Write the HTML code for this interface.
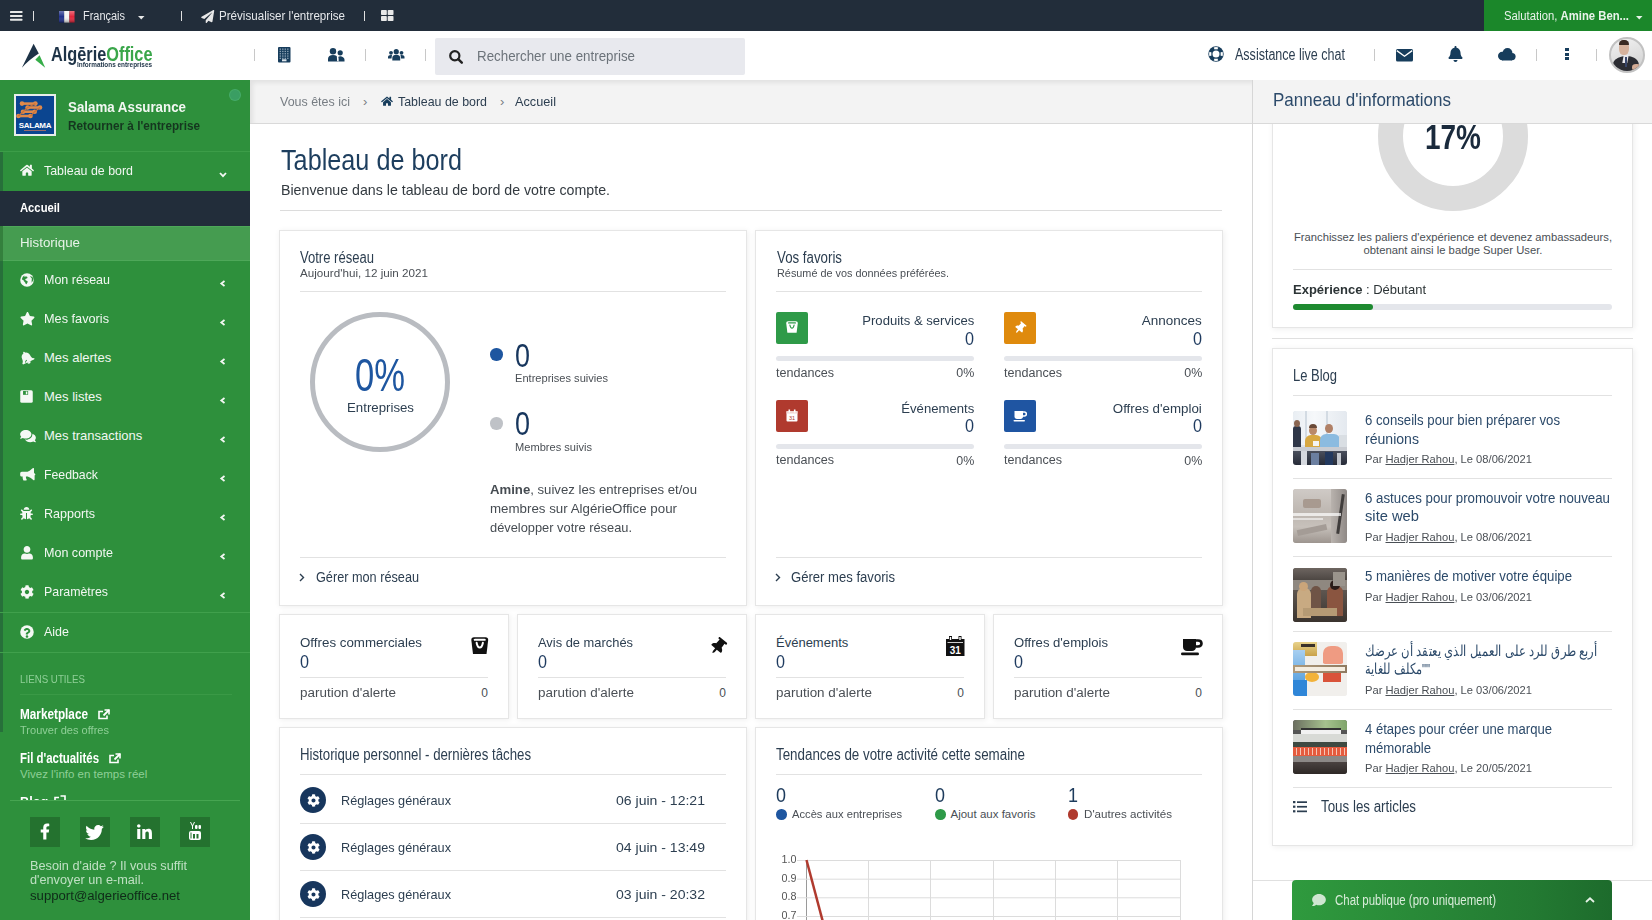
<!DOCTYPE html>
<html><head><meta charset="utf-8"><title>AlgerieOffice</title>
<style>html,body{margin:0;padding:0;width:1652px;height:920px;overflow:hidden;background:#fff;font-family:"Liberation Sans",sans-serif;position:relative}
.t{position:absolute;white-space:nowrap}
svg{position:absolute;overflow:visible}
</style></head><body>
<div style="position:absolute;left:0px;top:0px;width:1652px;height:31px;background:#222d3a"></div>
<div style="position:absolute;left:1484px;top:0px;width:168px;height:31px;background:#1b872a"></div>
<div style="position:absolute;left:0px;top:31px;width:1652px;height:49px;background:#fff"></div>
<div style="position:absolute;left:435px;top:38px;width:310px;height:37px;background:#e8e9ee;border-radius:2px"></div>
<div style="position:absolute;left:0px;top:80px;width:250px;height:840px;background:#2e903c"></div>
<div style="position:absolute;left:0px;top:152px;width:3px;height:580px;background:#27703a"></div>
<div style="position:absolute;left:0px;top:151px;width:250px;height:1px;background:#3c9d48"></div>
<div style="position:absolute;left:0px;top:191px;width:250px;height:35px;background:#222d3a"></div>
<div style="position:absolute;left:0px;top:226px;width:250px;height:35px;background:#459c50;border-top:1px solid #4ea859;border-bottom:1px solid #4ea859;box-sizing:border-box"></div>
<div style="position:absolute;left:0px;top:226px;width:3px;height:35px;background:#34803d"></div>
<div style="position:absolute;left:0px;top:612px;width:250px;height:1px;background:#40a04c"></div>
<div style="position:absolute;left:0px;top:652px;width:250px;height:1px;background:#40a04c"></div>
<div style="position:absolute;left:20px;top:694px;width:212px;height:1px;background:#3a9946"></div>
<div style="position:absolute;left:10px;top:800px;width:230px;height:1px;background:#46a551"></div>
<div style="position:absolute;left:30px;top:817px;width:30px;height:30px;background:#24722f"></div>
<div style="position:absolute;left:80px;top:817px;width:30px;height:30px;background:#24722f"></div>
<div style="position:absolute;left:130px;top:817px;width:30px;height:30px;background:#24722f"></div>
<div style="position:absolute;left:180px;top:817px;width:30px;height:30px;background:#24722f"></div>
<div style="position:absolute;left:250px;top:80px;width:1002px;height:43px;background:#f3f3f3;border-bottom:1px solid #d9d9d9;box-sizing:border-box;height:44px;box-shadow:inset 3px 3px 4px rgba(0,0,0,0.07)"></div>
<div style="position:absolute;left:1252px;top:80px;width:1px;height:840px;background:#d6d6d6"></div>
<div style="position:absolute;left:1253px;top:80px;width:399px;height:44px;background:#f3f3f3;border-bottom:1px solid #d9d9d9;box-sizing:border-box"></div>
<div style="position:absolute;left:280px;top:210px;width:942px;height:1px;background:#dcdcdc"></div>
<div style="position:absolute;left:279px;top:230px;width:468px;height:376px;background:#fff;border:1px solid #e6e6e6;box-sizing:border-box;box-shadow:1px 1px 6px rgba(0,0,0,0.07)"></div>
<div style="position:absolute;left:755px;top:230px;width:468px;height:376px;background:#fff;border:1px solid #e6e6e6;box-sizing:border-box;box-shadow:1px 1px 6px rgba(0,0,0,0.07)"></div>
<div style="position:absolute;left:279px;top:614px;width:230px;height:105px;background:#fff;border:1px solid #e6e6e6;box-sizing:border-box;box-shadow:1px 1px 6px rgba(0,0,0,0.07)"></div>
<div style="position:absolute;left:517px;top:614px;width:230px;height:105px;background:#fff;border:1px solid #e6e6e6;box-sizing:border-box;box-shadow:1px 1px 6px rgba(0,0,0,0.07)"></div>
<div style="position:absolute;left:755px;top:614px;width:230px;height:105px;background:#fff;border:1px solid #e6e6e6;box-sizing:border-box;box-shadow:1px 1px 6px rgba(0,0,0,0.07)"></div>
<div style="position:absolute;left:993px;top:614px;width:230px;height:105px;background:#fff;border:1px solid #e6e6e6;box-sizing:border-box;box-shadow:1px 1px 6px rgba(0,0,0,0.07)"></div>
<div style="position:absolute;left:279px;top:727px;width:468px;height:220px;background:#fff;border:1px solid #e6e6e6;box-sizing:border-box;box-shadow:1px 1px 6px rgba(0,0,0,0.07)"></div>
<div style="position:absolute;left:755px;top:727px;width:468px;height:220px;background:#fff;border:1px solid #e6e6e6;box-sizing:border-box;box-shadow:1px 1px 6px rgba(0,0,0,0.07)"></div>
<div style="position:absolute;left:1272px;top:100px;width:361px;height:228px;background:#fff;border:1px solid #e6e6e6;box-sizing:border-box;box-shadow:1px 1px 6px rgba(0,0,0,0.07)"></div>
<div style="position:absolute;left:1253px;top:80px;width:399px;height:44px;background:#f3f3f3;border-bottom:1px solid #d9d9d9;box-sizing:border-box"></div>
<div style="position:absolute;left:1272px;top:338px;width:361px;height:1px;background:#e0e0e0"></div>
<div style="position:absolute;left:1272px;top:348px;width:361px;height:498px;background:#fff;border:1px solid #e6e6e6;box-sizing:border-box;box-shadow:1px 1px 6px rgba(0,0,0,0.07)"></div>
<div style="position:absolute;left:1253px;top:880px;width:399px;height:1px;background:#e0e0e0"></div>
<svg style="left:10px;top:11px;" width="12.5" height="10" viewBox="0 0 12.5 10"><rect x="0" y="0" width="12.5" height="2" rx=".6" fill="#e8e8e8"/><rect x="0" y="3.9" width="12.5" height="2" rx=".6" fill="#e8e8e8"/><rect x="0" y="7.7" width="12.5" height="2" rx=".6" fill="#e8e8e8"/></svg>
<div style="position:absolute;left:33px;top:11px;width:1px;height:10px;background:#e0e0e0"></div>
<div style="position:absolute;left:181px;top:11px;width:1px;height:10px;background:#e0e0e0"></div>
<div style="position:absolute;left:364px;top:11px;width:1px;height:10px;background:#e0e0e0"></div>
<svg style="left:59px;top:11px;" width="15.5" height="11.5" viewBox="0 0 15.5 11.5"><rect x="0" y="0" width="5.2" height="11.5" fill="#1f2f8a"/><rect x="5.2" y="0" width="5.2" height="11.5" fill="#f4f4f4"/><rect x="10.4" y="0" width="5.1" height="11.5" fill="#e3253a"/><rect x="0" y="0" width="15.5" height="11.5" fill="url(#fl)" opacity=".35"/><defs><linearGradient id="fl" x1="0" y1="0" x2="0" y2="1"><stop offset="0" stop-color="#fff"/><stop offset=".5" stop-color="#fff" stop-opacity="0"/><stop offset="1" stop-color="#000"/></linearGradient></defs></svg>
<svg style="left:137.5px;top:15.8px;" width="6.5" height="3.5" viewBox="0 0 6.5 3.5"><path d="M0 0H6.5L3.25 3.5Z" fill="#e8e8e8"/></svg>
<svg style="left:201px;top:9.5px;" width="13.5" height="13" viewBox="0 0 512 512"><path fill="#e8e8e8" d="M476 3.2L12.5 270.6c-18.1 10.4-15.8 35.6 2.2 43.2L121 358.4l287.3-253.2c5.5-4.9 13.3 2.6 8.6 8.3L176 407v80.5c0 23.6 28.5 32.9 42.5 15.8L282 426l124.6 52.2c14.2 6 30.4-2.9 33-18.2l72-432C515 7.8 493.3-6.8 476 3.2z"/></svg>
<svg style="left:381px;top:10px;" width="12.5" height="11" viewBox="0 0 12.5 11"><rect x="0" y="0" width="5.8" height="5" rx=".8" fill="#e8e8e8"/><rect x="6.7" y="0" width="5.8" height="5" rx=".8" fill="#e8e8e8"/><rect x="0" y="6" width="5.8" height="5" rx=".8" fill="#e8e8e8"/><rect x="6.7" y="6" width="5.8" height="5" rx=".8" fill="#e8e8e8"/></svg>
<svg style="left:1636px;top:15.5px;" width="6.5" height="3.5" viewBox="0 0 6.5 3.5"><path d="M0 0H6.5L3.25 3.5Z" fill="#e8f3ea"/></svg>
<svg style="left:20px;top:42px;" width="28" height="28" viewBox="20 42 28 28"><path d="M33.6 43.8L38.8 53.6Q30 59 21.9 67.8Z" fill="#1e3347"/><path d="M39.6 55.3L45.2 67.8L35.3 59.8Z" fill="#35ad48"/></svg>
<div style="position:absolute;left:254px;top:49px;width:1px;height:12px;background:#c8c8c8"></div>
<div style="position:absolute;left:365px;top:49px;width:1px;height:12px;background:#c8c8c8"></div>
<div style="position:absolute;left:425px;top:49px;width:1px;height:12px;background:#c8c8c8"></div>
<div style="position:absolute;left:1374px;top:49px;width:1px;height:12px;background:#c8c8c8"></div>
<div style="position:absolute;left:1536px;top:49px;width:1px;height:12px;background:#c8c8c8"></div>
<div style="position:absolute;left:1596px;top:49px;width:1px;height:12px;background:#c8c8c8"></div>
<svg style="left:278px;top:46.5px;" width="12.5" height="15.5" viewBox="0 0 12.5 15.5"><rect x="0" y="0" width="12.5" height="15.5" rx="1" fill="#173d5c"/><rect x="1.6" y="1.5" width="1.4" height="1.3" fill="#8aa0b3"/><rect x="4.1" y="1.5" width="1.4" height="1.3" fill="#8aa0b3"/><rect x="6.6" y="1.5" width="1.4" height="1.3" fill="#8aa0b3"/><rect x="9.1" y="1.5" width="1.4" height="1.3" fill="#8aa0b3"/><rect x="1.6" y="3.8" width="1.4" height="1.3" fill="#8aa0b3"/><rect x="4.1" y="3.8" width="1.4" height="1.3" fill="#8aa0b3"/><rect x="6.6" y="3.8" width="1.4" height="1.3" fill="#8aa0b3"/><rect x="9.1" y="3.8" width="1.4" height="1.3" fill="#8aa0b3"/><rect x="1.6" y="6.1" width="1.4" height="1.3" fill="#8aa0b3"/><rect x="4.1" y="6.1" width="1.4" height="1.3" fill="#8aa0b3"/><rect x="6.6" y="6.1" width="1.4" height="1.3" fill="#8aa0b3"/><rect x="9.1" y="6.1" width="1.4" height="1.3" fill="#8aa0b3"/><rect x="1.6" y="8.399999999999999" width="1.4" height="1.3" fill="#8aa0b3"/><rect x="4.1" y="8.399999999999999" width="1.4" height="1.3" fill="#8aa0b3"/><rect x="6.6" y="8.399999999999999" width="1.4" height="1.3" fill="#8aa0b3"/><rect x="9.1" y="8.399999999999999" width="1.4" height="1.3" fill="#8aa0b3"/><rect x="1.6" y="10.7" width="1.4" height="1.3" fill="#8aa0b3"/><rect x="4.1" y="10.7" width="1.4" height="1.3" fill="#8aa0b3"/><rect x="6.6" y="10.7" width="1.4" height="1.3" fill="#8aa0b3"/><rect x="9.1" y="10.7" width="1.4" height="1.3" fill="#8aa0b3"/><rect x="4" y="12.3" width="4.5" height="2" fill="#dfe6ec"/></svg>
<svg style="left:327.5px;top:47.5px;" width="16.5" height="13.5" viewBox="0 0 16.5 13.5"><circle cx="5" cy="3.3" r="3.2" fill="#173d5c"/><path d="M0 13.5V11C0 8.5 2 7 5 7S10 8.5 10 11V13.5Z" fill="#173d5c"/><circle cx="12.2" cy="4.8" r="2.6" fill="#173d5c"/><path d="M9.2 13.5V11.5C9.2 9.5 10.5 8.3 12.3 8.3S16.5 9.5 16.5 11.8V13.5Z" fill="#173d5c"/><path d="M8.8 7.2C10 7.7 10.6 9 10.6 11V13.5H9.2" fill="#fff"/></svg>
<svg style="left:387.5px;top:48.5px;" width="16.5" height="11.5" viewBox="0 0 16.5 11.5"><circle cx="8.25" cy="2.7" r="2.6" fill="#173d5c"/><path d="M4.3 11.5V8.8C4.3 6.9 6 5.8 8.25 5.8S12.2 6.9 12.2 8.8V11.5Z" fill="#173d5c"/><circle cx="3" cy="3.8" r="1.9" fill="#173d5c"/><path d="M0 9.6V8C0 6.8 1.2 6 3 6H4L3.5 9.6Z" fill="#173d5c"/><circle cx="13.5" cy="3.8" r="1.9" fill="#173d5c"/><path d="M16.5 9.6V8C16.5 6.8 15.3 6 13.5 6H12.5L13 9.6Z" fill="#173d5c"/></svg>
<svg style="left:449px;top:49.5px;" width="14" height="13.5" viewBox="0 0 14 13.5"><circle cx="5.8" cy="5.8" r="4.6" fill="none" stroke="#222" stroke-width="2.2"/><path d="M9.2 9.2L12.8 12.6" stroke="#222" stroke-width="2.5" stroke-linecap="round"/></svg>
<svg style="left:1208.3px;top:46px;" width="16" height="16" viewBox="0 0 16 16"><circle cx="8" cy="8" r="7.7" fill="#173d5c"/><circle cx="8" cy="8" r="3.5" fill="#fff"/><g transform="rotate(0 8 8)"><path d="M5.7 1.4Q8 0.8 10.3 1.4L9.4 3.5Q8 3.1 6.6 3.5Z" fill="#fff"/></g><g transform="rotate(90 8 8)"><path d="M5.7 1.4Q8 0.8 10.3 1.4L9.4 3.5Q8 3.1 6.6 3.5Z" fill="#fff"/></g><g transform="rotate(180 8 8)"><path d="M5.7 1.4Q8 0.8 10.3 1.4L9.4 3.5Q8 3.1 6.6 3.5Z" fill="#fff"/></g><g transform="rotate(270 8 8)"><path d="M5.7 1.4Q8 0.8 10.3 1.4L9.4 3.5Q8 3.1 6.6 3.5Z" fill="#fff"/></g></svg>
<svg style="left:1396px;top:48.5px;" width="17" height="12.5" viewBox="0 0 17 12.5"><rect x="0" y="0" width="17" height="12.5" rx="1.5" fill="#173d5c"/><path d="M0.8 1.6L8.5 7.2L16.2 1.6" fill="none" stroke="#fff" stroke-width="1.4"/></svg>
<svg style="left:1448px;top:46.3px;" width="15" height="16" viewBox="0 0 448 512"><path fill="#173d5c" d="M224 512c35.3 0 63.9-28.6 63.9-64H160.1c0 35.4 28.6 64 63.9 64zm215.4-149.7c-19.3-20.7-55.5-52-55.5-154.3 0-77.7-54.5-139.9-127.9-155.2V32c0-17.7-14.3-32-32-32s-32 14.3-32 32v20.8C118.6 68.1 64.100 130.300 64.100 208c0 102.300-36.200 133.600-55.500 154.300-6 6.400-8.700 14.100-8.600 21.700.1 16.400 13 32 32.100 32h383.800c19.100 0 32-15.600 32.100-32 .1-7.600-2.600-15.300-8.600-21.700z"/></svg>
<svg style="left:1498px;top:47.5px;" width="17.5" height="12.5" viewBox="0 0 17.5 12.5"><circle cx="9.5" cy="5" r="4.9" fill="#173d5c"/><circle cx="4.2" cy="8" r="4.2" fill="#173d5c"/><circle cx="14" cy="8.6" r="3.6" fill="#173d5c"/><rect x="4" y="7" width="10" height="5.5" fill="#173d5c"/></svg>
<div style="position:absolute;left:1565px;top:48px;width:3.5px;height:3px;background:#173d5c"></div>
<div style="position:absolute;left:1565px;top:52.5px;width:3.5px;height:3px;background:#173d5c"></div>
<div style="position:absolute;left:1565px;top:57px;width:3.5px;height:3px;background:#173d5c"></div>
<div style="position:absolute;left:1609px;top:37px;width:36px;height:36px;border-radius:50%;box-sizing:border-box;border:2px solid #c2c2c2;overflow:hidden;background:linear-gradient(160deg,#f2f2f2,#cfcfcf)"><div style="position:absolute;left:8px;top:1px;width:10px;height:15px;border-radius:45% 45% 40% 40%;background:#d6b29c"></div><div style="position:absolute;left:8px;top:1px;width:10px;height:5px;border-radius:5px 5px 1px 1px;background:#3a2a22"></div><div style="position:absolute;left:2px;top:17px;width:26px;height:20px;border-radius:40% 50% 0 0;background:#2c2d33;transform:rotate(-8deg)"></div><div style="position:absolute;left:12px;top:16px;width:5px;height:8px;background:#e8e8ec;transform:skewX(-10deg)"></div><div style="position:absolute;left:14px;top:18px;width:2px;height:10px;background:#39466a"></div><div style="position:absolute;left:21px;top:25px;width:9px;height:7px;border-radius:45%;background:#d3ab95"></div></div>
<div style="position:absolute;left:14px;top:94px;width:42px;height:42px;box-sizing:border-box;border:2px solid #e8eee9;background:#0b4590;overflow:hidden"><svg style="left:0;top:0" width="38" height="38" viewBox="0 0 38 38"><g fill="#e0894a"><path d="M6 7.6H19.4" stroke="#e0894a" stroke-width="2.6"/><circle cx="6" cy="7.6" r="2.3"/><circle cx="19.4" cy="7.6" r="2.3"/><path d="M11.6 11.5H24" stroke="#e0894a" stroke-width="2.6"/><circle cx="11.6" cy="11.5" r="2.3"/><circle cx="24" cy="11.5" r="2.3"/><path d="M7 15.7H18.7" stroke="#e0894a" stroke-width="2.6"/><circle cx="7" cy="15.7" r="2.3"/><circle cx="18.7" cy="15.7" r="2.3"/><path d="M2.4 20H14.5" stroke="#e0894a" stroke-width="2.6"/><circle cx="2.4" cy="20" r="2.3"/><circle cx="14.5" cy="20" r="2.3"/><path d="M19.4 7.6L11.6 11.5M24 11.5L18.7 15.7M11.6 11.5L7 15.7M18.7 15.7L14.5 20M7 15.7L2.4 20" stroke="#c9733a" stroke-width="1.2"/></g></svg><div style="position:absolute;left:1px;top:26px;width:36px;text-align:center;font:bold 8px/8px 'Liberation Sans',sans-serif;color:#fff;letter-spacing:-.3px">SALAMA</div><div style="position:absolute;left:8px;top:34px;width:22px;height:1px;background:#9a6a6a"></div></div>
<div style="position:absolute;left:229.5px;top:89.5px;width:10px;height:10px;border-radius:50%;background:#3a9e63;box-shadow:0 0 0 1px #46ab6a"></div>
<svg style="left:19.5px;top:163.75px;" width="14" height="12.5" viewBox="0 0 576 512"><path fill="#f4f8f4" d="M280.4 148.3L96 300.1V464a16 16 0 0 0 16 16l112-.3a16 16 0 0 0 16-16V368a16 16 0 0 1 16-16h64a16 16 0 0 1 16 16v95.6a16 16 0 0 0 16 16l112 .3a16 16 0 0 0 16-16V300L295.7 148.3a12.2 12.2 0 0 0-15.3 0zM571.6 251.5L488 182.6V44a12 12 0 0 0-12-12h-56a12 12 0 0 0-12 12v72.6L318.5 43a48 48 0 0 0-61 0L4.3 251.5a12 12 0 0 0-1.6 16.9l25.5 31A12 12 0 0 0 45.2 301l235.2-193.7a12.2 12.2 0 0 1 15.3 0L530.900 301a12 12 0 0 0 16.900-1.600l25.500-31a12 12 0 0 0-1.700-16.900z"/></svg>
<svg style="left:19.5px;top:273.0px;" width="14" height="14" viewBox="0 0 512 512"><circle cx="256" cy="256" r="248" fill="#f4f8f4"/><path fill="#2e903c" d="M160 90c-50 30-90 90-90 160 30-10 60 10 70 40s40 30 50 60c10 40 20 60 50 60 10-40 50-60 40-100-10-30-60-20-80-50-20-30 10-60 40-60 40 0 40-40 20-60-30-10-70-20-100 10zM360 110c30 20 20 50 50 60 20 10 30 40 20 70-10 40 10 80-20 120 50-30 80-90 80-150 0-40-60-90-130-100z"/></svg>
<svg style="left:19.5px;top:311.75px;" width="15" height="13.5" viewBox="0 0 576 512"><path fill="#f4f8f4" d="M259.3 17.8L194 150.200 47.9 171.500c-26.200 3.800-36.700 36.100-17.700 54.600l105.700 103-25 145.500c-4.500 26.300 23.200 46 46.400 33.700L288 439.600l130.700 68.700c23.200 12.200 50.900-7.400 46.400-33.700l-25-145.500 105.700-103c19-18.500 8.500-50.800-17.700-54.600L382 150.200 316.700 17.800c-11.700-23.600-45.600-23.900-57.400 0z"/></svg>
<svg style="left:19.5px;top:350.5px;" width="14" height="14" viewBox="0 0 512 512"><g transform="rotate(-25 256 256)"><path fill="#f4f8f4" d="M256 480c35 0 64-28 64-64H192c0 36 29 64 64 64zm200-120c-20-20-56-52-56-154 0-78-54-140-128-155V32c0-18-14-32-32-32s-32 14-32 32v20C134 66 80 128 80 206c0 102-36 134-56 154-6 6-8 14-8 22 0 16 13 32 32 32h416c19 0 32-16 32-32 0-8-3-16-8-22z"/><path fill="#2e903c" d="M120 380c20-40 50-60 90-70l10 30c-40 10-60 30-70 50z"/></g></svg>
<svg style="left:20px;top:390.0px;" width="13" height="13" viewBox="0 0 512 512"><rect x="10" y="10" width="492" height="492" rx="60" fill="#f4f8f4"/><rect x="120" y="40" width="200" height="150" fill="#2e903c"/><rect x="230" y="60" width="60" height="110" fill="#f4f8f4"/></svg>
<svg style="left:19.5px;top:428.5px;" width="16" height="14" viewBox="0 0 576 512"><path fill="#f4f8f4" d="M416 192c0-88-93-160-208-160S0 104 0 192c0 34 14 66 38 92-13 30-35 54-36 54-2 2-3 6-2 9 1 3 4 5 7 5 37 0 67-12 89-26 32 15 71 24 112 24 115 0 208-72 208-160zm122 220c24-26 38-58 38-92 0-67-53-124-128-148 1 7 1 13 1 20 0 106-108 192-240 192-11 0-21-1-32-2 31 57 105 98 192 98 41 0 80-9 112-24 22 14 52 26 89 26 3 0 6-2 7-5 1-3 0-7-2-9-1 0-23-24-36-54z"/><path fill="#2e903c" d="M420 200c0 90-100 170-220 175l25 20c110 0 210-80 215-190z"/></svg>
<svg style="left:19.5px;top:468.0px;" width="15" height="13" viewBox="0 0 576 512"><path fill="#f4f8f4" d="M576 240c0-24-13-44-32-55V32c0-9-7-32-32-32-7 0-14 2-20 7l-85 68C364 126 298 144 256 144H64c-35 0-64 29-64 64v64c0 35 29 64 64 64h34c-1 10-2 21-2 32 0 40 9 77 26 110 5 11 17 18 29 18h74c26 0 42-30 26-51-16-22-26-49-26-77 0-10 1-21 4-30h31c42 0 108 18 171 69l85 68c6 5 13 7 20 7 25 0 32-22 32-32V295c19-11 32-31 32-55z"/></svg>
<svg style="left:20px;top:507.0px;" width="13" height="13" viewBox="0 0 512 512"><path fill="#f4f8f4" d="M511 288c-1 17-16 30-33 30h-56v18c0 22-5 43-14 61l53 53c13 13 13 33 0 45-12 13-33 13-45 0l-48-48C346 468 312 480 276 480V240h-40v240c-36 0-70-12-92-33l-48 48c-12 13-33 13-45 0-13-12-13-32 0-45l53-53c-9-18-14-39-14-61v-18H34c-17 0-32-13-33-30-1-18 14-34 32-34h57v-59l-46-46c-13-12-13-33 0-45 12-13 33-13 45 0l55 54h224l55-54c12-13 33-13 45 0 13 12 13 33 0 45l-46 46v59h57c18 0 33 16 32 34zM257 0c-62 0-112 50-112 112h224C369 50 319 0 257 0z"/></svg>
<svg style="left:20.5px;top:545.75px;" width="12" height="13.5" viewBox="0 0 448 512"><path fill="#f4f8f4" d="M224 256c70 0 128-57 128-128S294 0 224 0 96 57 96 128s57 128 128 128zm90 32h-17c-22 10-47 16-73 16s-51-6-73-16h-17C60 288 0 348 0 422v42c0 26 22 48 48 48h352c26 0 48-22 48-48v-42c0-74-60-134-134-134z"/></svg>
<svg style="left:19.5px;top:584.5px;" width="14" height="14" viewBox="0 0 512 512"><path fill="#f4f8f4" d="M487 315l-42-25c4-23 4-46 0-69l42-25c5-3 7-8 6-14-11-35-30-67-54-93-4-4-10-5-15-2l-42 25c-18-15-38-27-60-35V28c0-6-4-11-10-12-36-8-73-8-107 0-6 1-10 6-10 12v49c-22 8-42 20-60 35L93 87c-5-3-11-2-15 2-24 26-43 58-54 93-2 6 1 11 6 14l42 25c-4 23-4 46 0 69l-42 25c-5 3-7 8-6 14 11 35 30 67 54 93 4 4 10 5 15 2l42-25c18 15 38 27 60 35v49c0 6 4 11 10 12 36 8 73 8 107 0 6-1 10-6 10-12v-49c22-8 42-20 60-35l42 25c5 3 11 2 15-2 24-26 43-58 54-93 2-6-1-11-6-14zM256 336c-44 0-80-36-80-80s36-80 80-80 80 36 80 80-36 80-80 80z"/></svg>
<svg style="left:19.5px;top:624.5px;" width="14" height="14" viewBox="0 0 512 512"><circle cx="256" cy="256" r="248" fill="#f4f8f4"/><path fill="#2e903c" d="M262 112c-56 0-92 23-120 65-4 5-3 13 3 17l34 26c5 4 13 3 17-2 18-23 31-36 59-36 22 0 49 14 49 35 0 16-13 24-35 36-25 14-58 32-58 75v8c0 7 5 12 12 12h56c7 0 12-5 12-12v-3c0-30 87-31 87-112 0-60-63-109-116-109zm-6 260c-26 0-48 22-48 48s22 48 48 48 48-22 48-48-22-48-48-48z"/></svg>
<svg style="left:218.5px;top:171.5px;" width="8" height="5.5" viewBox="0 0 8 5.5"><path d="M1 1L4 4.2L7 1" fill="none" stroke="#f4f8f4" stroke-width="1.8"/></svg>
<svg style="left:219.5px;top:280.0px;" width="5.5" height="7" viewBox="0 0 5.5 7"><path d="M4.5 1L1.3 3.5L4.5 6" fill="none" stroke="#f4f8f4" stroke-width="1.8"/></svg>
<svg style="left:219.5px;top:319.0px;" width="5.5" height="7" viewBox="0 0 5.5 7"><path d="M4.5 1L1.3 3.5L4.5 6" fill="none" stroke="#f4f8f4" stroke-width="1.8"/></svg>
<svg style="left:219.5px;top:358.0px;" width="5.5" height="7" viewBox="0 0 5.5 7"><path d="M4.5 1L1.3 3.5L4.5 6" fill="none" stroke="#f4f8f4" stroke-width="1.8"/></svg>
<svg style="left:219.5px;top:397.0px;" width="5.5" height="7" viewBox="0 0 5.5 7"><path d="M4.5 1L1.3 3.5L4.5 6" fill="none" stroke="#f4f8f4" stroke-width="1.8"/></svg>
<svg style="left:219.5px;top:436.0px;" width="5.5" height="7" viewBox="0 0 5.5 7"><path d="M4.5 1L1.3 3.5L4.5 6" fill="none" stroke="#f4f8f4" stroke-width="1.8"/></svg>
<svg style="left:219.5px;top:475.0px;" width="5.5" height="7" viewBox="0 0 5.5 7"><path d="M4.5 1L1.3 3.5L4.5 6" fill="none" stroke="#f4f8f4" stroke-width="1.8"/></svg>
<svg style="left:219.5px;top:514.0px;" width="5.5" height="7" viewBox="0 0 5.5 7"><path d="M4.5 1L1.3 3.5L4.5 6" fill="none" stroke="#f4f8f4" stroke-width="1.8"/></svg>
<svg style="left:219.5px;top:553.0px;" width="5.5" height="7" viewBox="0 0 5.5 7"><path d="M4.5 1L1.3 3.5L4.5 6" fill="none" stroke="#f4f8f4" stroke-width="1.8"/></svg>
<svg style="left:219.5px;top:592.0px;" width="5.5" height="7" viewBox="0 0 5.5 7"><path d="M4.5 1L1.3 3.5L4.5 6" fill="none" stroke="#f4f8f4" stroke-width="1.8"/></svg>
<svg style="left:97.5px;top:708.5px;" width="12" height="11" viewBox="0 0 12 11"><path d="M9 6.5V9.5H1V2.5H5" fill="none" stroke="#fff" stroke-width="1.6"/><path d="M6.5 1H11V5.5" fill="none" stroke="#fff" stroke-width="1.6"/><path d="M11 1L5.5 6.5" stroke="#fff" stroke-width="1.8"/></svg>
<svg style="left:109px;top:752.5px;" width="12" height="11" viewBox="0 0 12 11"><path d="M9 6.5V9.5H1V2.5H5" fill="none" stroke="#fff" stroke-width="1.6"/><path d="M6.5 1H11V5.5" fill="none" stroke="#fff" stroke-width="1.6"/><path d="M11 1L5.5 6.5" stroke="#fff" stroke-width="1.8"/></svg>
<div style="position:absolute;left:0;top:790px;width:250px;height:10px;overflow:hidden"><div style="position:absolute;left:20px;top:4px;font:bold 15.5px/16px 'Liberation Sans',sans-serif;color:#fff;transform:scaleX(.82);transform-origin:left">Blog</div><svg style="left:54px;top:5px" width="12" height="11" viewBox="0 0 12 11"><path d="M9 6.5V9.5H1V2.5H5" fill="none" stroke="#fff" stroke-width="1.6"/><path d="M6.5 1H11V5.5" fill="none" stroke="#fff" stroke-width="1.6"/></svg></div>
<svg style="left:40px;top:822px;" width="10" height="19" viewBox="0 0 320 512"><path fill="#fff" d="M279 288l14-93h-89v-60c0-25 12-50 52-50h40V6S260 0 225 0c-73 0-121 44-121 125v70H23v93h81v224h100V288z"/></svg>
<svg style="left:85px;top:825px;" width="19" height="15" viewBox="0 0 512 416"><path fill="#fff" d="M459 104c.3 4.5.3 9 .3 13.5 0 139-106 299-299 299-60 0-115-17-161-47 8.4 1 17 1.300 25.300 1.300 49 0 94-17 130-45-46-1-85-31-98-73 6.500 1 13 1.600 20 1.600 9.400 0 19-1.300 27.600-3.600-48-9.700-84-52-84-103v-1.300c14 7.800 30 12.700 47.400 13.300-28.300-19-46.800-51-46.800-87 0-19.500 5.200-37.400 14.300-53 52 64 130 106 217 110-1.600-7.800-2.600-15.900-2.600-24 0-58 47-106 106-106 30.500 0 58 12.700 77.500 33.500 24-4.500 47-13.600 67-25.700-8 24.300-24 45-45 57 21-2.300 42-8 60.400-16-14.300 20.800-32.200 39.300-52.600 54.300z"/></svg>
<svg style="left:137px;top:824px;" width="15" height="15" viewBox="0 0 448 448"><path fill="#fff" d="M100 448H7V149h93zM54 108C24 108 0 83 0 53a54 54 0 0 1 107 0c0 30-24 55-53 55zM447 448h-93V302c0-35-1-79-48-79-48 0-56 37-56 77v148h-93V149h89v41h1c12-24 43-48 88-48 94 0 111 62 111 142v164z"/></svg>
<svg style="left:188px;top:821px;" width="14" height="20" viewBox="0 0 14 20"><g fill="#fff"><rect x="1" y="10" width="12" height="9" rx="2"/><path d="M2 1L4 5V8H5V5L7 1H6L4.5 4L3 1Z"/><rect x="7" y="4" width="2.5" height="4" rx="1"/><rect x="10.5" y="4" width="2.5" height="4" rx="1"/></g><g fill="#24722f"><rect x="2.5" y="11.5" width="1" height="6"/><rect x="5" y="13" width="2" height="4.5"/><rect x="8.5" y="13" width="2" height="4.5"/></g></svg>
<svg style="left:381px;top:96px;" width="12" height="10.5" viewBox="0 0 576 512"><path fill="#173d5c" d="M280.4 148.3L96 300.1V464a16 16 0 0 0 16 16l112-.3a16 16 0 0 0 16-16V368a16 16 0 0 1 16-16h64a16 16 0 0 1 16 16v95.6a16 16 0 0 0 16 16l112 .3a16 16 0 0 0 16-16V300L295.7 148.3a12.2 12.2 0 0 0-15.3 0zM571.6 251.5L488 182.6V44a12 12 0 0 0-12-12h-56a12 12 0 0 0-12 12v72.6L318.5 43a48 48 0 0 0-61 0L4.3 251.5a12 12 0 0 0-1.6 16.9l25.5 31A12 12 0 0 0 45.2 301l235.2-193.7a12.2 12.2 0 0 1 15.3 0L530.900 301a12 12 0 0 0 16.900-1.600l25.500-31a12 12 0 0 0-1.700-16.900z"/></svg>
<div style="position:absolute;left:300px;top:291px;width:426px;height:1px;background:#e2e2e2"></div>
<div style="position:absolute;left:300px;top:557px;width:426px;height:1px;background:#e2e2e2"></div>
<div style="position:absolute;left:310px;top:311.5px;width:140px;height:140px;border-radius:50%;box-sizing:border-box;border:5px solid #b9bcc1"></div>
<div style="position:absolute;left:490px;top:348px;width:12.5px;height:12.5px;border-radius:50%;background:#1e56a0"></div>
<div style="position:absolute;left:490px;top:417px;width:12.5px;height:12.5px;border-radius:50%;background:#bfc2c7"></div>
<svg style="left:299px;top:572.5px;" width="6" height="9" viewBox="0 0 6 9"><path d="M1 1L4.5 4.5L1 8" fill="none" stroke="#2c3e50" stroke-width="1.4"/></svg>
<svg style="left:775px;top:572.5px;" width="6" height="9" viewBox="0 0 6 9"><path d="M1 1L4.5 4.5L1 8" fill="none" stroke="#2c3e50" stroke-width="1.4"/></svg>
<div style="position:absolute;left:776px;top:291px;width:426px;height:1px;background:#e2e2e2"></div>
<div style="position:absolute;left:776px;top:557px;width:426px;height:1px;background:#e2e2e2"></div>
<div style="position:absolute;left:776px;top:312px;width:32px;height:32px;background:#2e9a48;border-radius:2px"></div>
<div style="position:absolute;left:1004px;top:312px;width:32px;height:32px;background:#df8a0d;border-radius:2px"></div>
<div style="position:absolute;left:776px;top:400px;width:32px;height:32px;background:#b03a2e;border-radius:2px"></div>
<div style="position:absolute;left:1004px;top:400px;width:32px;height:32px;background:#1f55a2;border-radius:2px"></div>
<div style="position:absolute;left:776px;top:356px;width:198px;height:5px;background:#e4e6eb;border-radius:3px"></div>
<div style="position:absolute;left:1004px;top:356px;width:198px;height:5px;background:#e4e6eb;border-radius:3px"></div>
<div style="position:absolute;left:776px;top:444px;width:198px;height:5px;background:#e4e6eb;border-radius:3px"></div>
<div style="position:absolute;left:1004px;top:444px;width:198px;height:5px;background:#e4e6eb;border-radius:3px"></div>
<svg style="left:786px;top:321px;" width="12" height="12" viewBox="0 0 17.5 17.5"><path d="M0.3 3Q0.3 0.3 3 0.3H14.5Q17.2 0.3 17.2 3L15.5 17H2Z" fill="#fff"/><path d="M2.8 2.6Q3 1.7 4 1.7H13.5Q14.5 1.7 14.7 2.6L14.5 3.8H3Z" fill="#2e9a48"/><path d="M5.6 5.8Q6.5 10.5 8.75 10.5Q11 10.5 11.9 5.8" fill="none" stroke="#2e9a48" stroke-width="1.6" stroke-linecap="round"/></svg>
<svg style="left:1014px;top:322px;" width="12" height="12" viewBox="0 0 384 512"><path fill="#fff" d="M298 214l-10-150h38c13 0 24-11 24-24V24c0-13-11-24-24-24H58C45 0 34 11 34 24v16c0 13 11 24 24 24h38L86 214C37 237 0 278 0 328c0 13 11 24 24 24h136v104c0 1 0 2 1 4l24 48c3 6 12 6 15 0l24-48c1-2 1-3 1-4V352h136c13 0 24-11 24-24 0-50-37-91-86-114z" transform="rotate(40 192 256)"/></svg>
<svg style="left:786px;top:409px;" width="12" height="13" viewBox="0 0 12 13"><rect x="0.5" y="2" width="11" height="10.5" rx="1" fill="#fff"/><rect x="0.5" y="2" width="11" height="2.5" fill="#f1d6d2"/><rect x="2.5" y="0.5" width="1.6" height="3" fill="#fff"/><rect x="7.9" y="0.5" width="1.6" height="3" fill="#fff"/><text x="6" y="11" font-size="5.5" text-anchor="middle" fill="#b03a2e" font-family="Liberation Sans">31</text></svg>
<svg style="left:1013px;top:409.5px;" width="14" height="12" viewBox="0 0 14 12"><path d="M1.5 1H10V6.5C10 8 9 9 7.5 9H4C2.5 9 1.5 8 1.5 6.5Z" fill="#fff"/><path d="M10 2H11.3C12.8 2 13.3 3 13.3 4S12.8 6 11.3 6H10" fill="none" stroke="#fff" stroke-width="1.5"/><rect x="0.5" y="10" width="11.5" height="1.6" rx=".8" fill="#fff"/></svg>
<div style="position:absolute;left:300px;top:677px;width:188px;height:1px;background:#e2e2e2"></div>
<div style="position:absolute;left:538px;top:677px;width:188px;height:1px;background:#e2e2e2"></div>
<div style="position:absolute;left:776px;top:677px;width:188px;height:1px;background:#e2e2e2"></div>
<div style="position:absolute;left:1014px;top:677px;width:188px;height:1px;background:#e2e2e2"></div>
<svg style="left:471px;top:637px;" width="17.5" height="17.5" viewBox="0 0 17.5 17.5"><path d="M0.3 3Q0.3 0.3 3 0.3H14.5Q17.2 0.3 17.2 3L15.5 17H2Z" fill="#111"/><path d="M2.8 2.6Q3 1.7 4 1.7H13.5Q14.5 1.7 14.7 2.6L14.5 3.8H3Z" fill="#fff"/><path d="M5.6 5.8Q6.5 10.5 8.75 10.5Q11 10.5 11.9 5.8" fill="none" stroke="#fff" stroke-width="2" stroke-linecap="round"/></svg>
<svg style="left:709.5px;top:637.5px;" width="16" height="17" viewBox="0 0 384 512"><path fill="#111" d="M298 214l-10-150h38c13 0 24-11 24-24V24c0-13-11-24-24-24H58C45 0 34 11 34 24v16c0 13 11 24 24 24h38L86 214C37 237 0 278 0 328c0 13 11 24 24 24h136v104c0 1 0 2 1 4l24 48c3 6 12 6 15 0l24-48c1-2 1-3 1-4V352h136c13 0 24-11 24-24 0-50-37-91-86-114z" transform="rotate(40 192 256)"/></svg>
<svg style="left:946px;top:635.5px;" width="18.5" height="20" viewBox="0 0 18.5 20"><rect x="0" y="3" width="18.5" height="17" fill="#111"/><rect x="3" y="0" width="3" height="5" fill="#111"/><rect x="12.5" y="0" width="3" height="5" fill="#111"/><rect x="3.8" y="1" width="1.4" height="3" fill="#fff"/><rect x="13.3" y="1" width="1.4" height="3" fill="#fff"/><rect x="1.5" y="6" width="15.5" height="0.8" fill="#fff"/><text x="9.25" y="17.5" font-size="10" font-weight="bold" text-anchor="middle" fill="#fff" font-family="Liberation Sans">31</text></svg>
<svg style="left:1180.5px;top:638.5px;" width="21" height="16.5" viewBox="0 0 21 16.5"><path d="M2 0H15V8C15 10.5 13 12 11 12H6C4 12 2 10.5 2 8Z" fill="#111"/><path d="M15 1.5H17C19.5 1.5 20.5 3 20.5 4.5S19.5 7.5 17 7.5H15" fill="none" stroke="#111" stroke-width="2.6"/><rect x="0" y="13.5" width="18" height="2.8" rx="1.4" fill="#111"/></svg>
<div style="position:absolute;left:300px;top:774px;width:426px;height:1px;background:#e2e2e2"></div>
<div style="position:absolute;left:300px;top:823px;width:426px;height:1px;background:#e2e2e2"></div>
<div style="position:absolute;left:300px;top:787px;width:26px;height:26px;border-radius:50%;background:#17365d"></div>
<svg style="left:306.5px;top:793.5px;" width="13" height="13" viewBox="0 0 512 512"><path fill="#fff" d="M487 315l-42-25c4-23 4-46 0-69l42-25c5-3 7-8 6-14-11-35-30-67-54-93-4-4-10-5-15-2l-42 25c-18-15-38-27-60-35V28c0-6-4-11-10-12-36-8-73-8-107 0-6 1-10 6-10 12v49c-22 8-42 20-60 35L93 87c-5-3-11-2-15 2-24 26-43 58-54 93-2 6 1 11 6 14l42 25c-4 23-4 46 0 69l-42 25c-5 3-7 8-6 14 11 35 30 67 54 93 4 4 10 5 15 2l42-25c18 15 38 27 60 35v49c0 6 4 11 10 12 36 8 73 8 107 0 6-1 10-6 10-12v-49c22-8 42-20 60-35l42 25c5 3 11 2 15-2 24-26 43-58 54-93 2-6-1-11-6-14zM256 336c-44 0-80-36-80-80s36-80 80-80 80 36 80 80-36 80-80 80z"/></svg>
<div style="position:absolute;left:300px;top:870px;width:426px;height:1px;background:#e2e2e2"></div>
<div style="position:absolute;left:300px;top:834px;width:26px;height:26px;border-radius:50%;background:#17365d"></div>
<svg style="left:306.5px;top:840.5px;" width="13" height="13" viewBox="0 0 512 512"><path fill="#fff" d="M487 315l-42-25c4-23 4-46 0-69l42-25c5-3 7-8 6-14-11-35-30-67-54-93-4-4-10-5-15-2l-42 25c-18-15-38-27-60-35V28c0-6-4-11-10-12-36-8-73-8-107 0-6 1-10 6-10 12v49c-22 8-42 20-60 35L93 87c-5-3-11-2-15 2-24 26-43 58-54 93-2 6 1 11 6 14l42 25c-4 23-4 46 0 69l-42 25c-5 3-7 8-6 14 11 35 30 67 54 93 4 4 10 5 15 2l42-25c18 15 38 27 60 35v49c0 6 4 11 10 12 36 8 73 8 107 0 6-1 10-6 10-12v-49c22-8 42-20 60-35l42 25c5 3 11 2 15-2 24-26 43-58 54-93 2-6-1-11-6-14zM256 336c-44 0-80-36-80-80s36-80 80-80 80 36 80 80-36 80-80 80z"/></svg>
<div style="position:absolute;left:300px;top:917px;width:426px;height:1px;background:#e2e2e2"></div>
<div style="position:absolute;left:300px;top:881px;width:26px;height:26px;border-radius:50%;background:#17365d"></div>
<svg style="left:306.5px;top:887.5px;" width="13" height="13" viewBox="0 0 512 512"><path fill="#fff" d="M487 315l-42-25c4-23 4-46 0-69l42-25c5-3 7-8 6-14-11-35-30-67-54-93-4-4-10-5-15-2l-42 25c-18-15-38-27-60-35V28c0-6-4-11-10-12-36-8-73-8-107 0-6 1-10 6-10 12v49c-22 8-42 20-60 35L93 87c-5-3-11-2-15 2-24 26-43 58-54 93-2 6 1 11 6 14l42 25c-4 23-4 46 0 69l-42 25c-5 3-7 8-6 14 11 35 30 67 54 93 4 4 10 5 15 2l42-25c18 15 38 27 60 35v49c0 6 4 11 10 12 36 8 73 8 107 0 6-1 10-6 10-12v-49c22-8 42-20 60-35l42 25c5 3 11 2 15-2 24-26 43-58 54-93 2-6-1-11-6-14zM256 336c-44 0-80-36-80-80s36-80 80-80 80 36 80 80-36 80-80 80z"/></svg>
<div style="position:absolute;left:776px;top:774px;width:426px;height:1px;background:#e2e2e2"></div>
<div style="position:absolute;left:776px;top:809px;width:10.5px;height:10.5px;border-radius:50%;background:#1e56a0"></div>
<div style="position:absolute;left:935px;top:809px;width:10.5px;height:10.5px;border-radius:50%;background:#2e9a48"></div>
<div style="position:absolute;left:1067.5px;top:809px;width:10.5px;height:10.5px;border-radius:50%;background:#b03a2e"></div>
<svg style="left:0px;top:0px;clip-path:inset(0 0 0 0)" width="1652" height="920" viewBox="0 0 1652 920"><path d="M806.5 860V920" stroke="#9a9a9a" stroke-width="1"/><path d="M868.5 860V920" stroke="#dcdcdc" stroke-width="1"/><path d="M930.5 860V920" stroke="#dcdcdc" stroke-width="1"/><path d="M993.5 860V920" stroke="#dcdcdc" stroke-width="1"/><path d="M1055.5 860V920" stroke="#dcdcdc" stroke-width="1"/><path d="M1117.5 860V920" stroke="#dcdcdc" stroke-width="1"/><path d="M1180.5 860V920" stroke="#dcdcdc" stroke-width="1"/><path d="M797 860.5H1181" stroke="#dcdcdc" stroke-width="1"/><path d="M797 879.2H1181" stroke="#dcdcdc" stroke-width="1"/><path d="M797 897.8H1181" stroke="#dcdcdc" stroke-width="1"/><path d="M797 916.5H1181" stroke="#dcdcdc" stroke-width="1"/><path d="M806.5 860L824 926" stroke="#b03a2e" stroke-width="2.5" fill="none"/></svg>
<div style="position:absolute;left:1273px;top:124px;width:359px;height:100px;overflow:hidden"><div style="position:absolute;left:104.5px;top:-63px;width:150px;height:150px;border-radius:50%;box-sizing:border-box;border:25px solid #dcdcdc"></div></div>
<div style="position:absolute;left:1293px;top:269px;width:319px;height:1px;background:#e2e2e2"></div>
<div style="position:absolute;left:1293px;top:304px;width:319px;height:6px;background:#e4e6eb;border-radius:3px"></div>
<div style="position:absolute;left:1293px;top:304px;width:80px;height:6px;background:#1e8a30;border-radius:3px"></div>
<div style="position:absolute;left:1293px;top:395px;width:319px;height:1px;background:#e2e2e2"></div>
<div style="position:absolute;left:1293px;top:478px;width:319px;height:1px;background:#e2e2e2"></div>
<div style="position:absolute;left:1293px;top:556px;width:319px;height:1px;background:#e2e2e2"></div>
<div style="position:absolute;left:1293px;top:631px;width:319px;height:1px;background:#e2e2e2"></div>
<div style="position:absolute;left:1293px;top:709px;width:319px;height:1px;background:#e2e2e2"></div>
<div style="position:absolute;left:1293px;top:787px;width:319px;height:1px;background:#e2e2e2"></div>
<div style="position:absolute;left:1293px;top:411px;width:54px;height:54px;border-radius:3px;overflow:hidden;background:#dde3ea"><div style="position:absolute;left:0;top:0;width:54px;height:54px;filter:blur(0.6px)"><div style="position:absolute;left:0px;top:0px;width:54px;height:34px;background:linear-gradient(90deg,#e9eef3,#f6f8fa 40%,#e4e9ef)"></div><div style="position:absolute;left:12px;top:0px;width:2px;height:30px;background:#d3dbe3"></div><div style="position:absolute;left:33px;top:0px;width:2px;height:30px;background:#d3dbe3"></div><div style="position:absolute;left:0px;top:15px;width:8px;height:24px;background:#2f3748;border-radius:3px 3px 0 0"></div><div style="position:absolute;left:1px;top:9px;width:6px;height:7px;background:#8a6652;border-radius:50%"></div><div style="position:absolute;left:12px;top:24px;width:17px;height:14px;background:#d8a842;border-radius:6px 6px 0 0"></div><div style="position:absolute;left:16px;top:15px;width:8px;height:9px;background:#b9896a;border-radius:50%"></div><div style="position:absolute;left:16px;top:13px;width:8px;height:4px;background:#6a4a38;border-radius:4px 4px 0 0"></div><div style="position:absolute;left:27px;top:23px;width:20px;height:15px;background:#8bbbe0;border-radius:6px 6px 0 0"></div><div style="position:absolute;left:32px;top:13px;width:8px;height:9px;background:#b08066;border-radius:50%"></div><div style="position:absolute;left:46px;top:24px;width:8px;height:12px;background:#d9dee3"></div><div style="position:absolute;left:20px;top:30px;width:6px;height:5px;background:#f4f4f4"></div><div style="position:absolute;left:0px;top:36px;width:54px;height:4px;background:#c9ccd2"></div><div style="position:absolute;left:0px;top:40px;width:54px;height:14px;background:linear-gradient(180deg,#4a4f5c,#262b38)"></div><div style="position:absolute;left:8px;top:40px;width:6px;height:14px;background:#d5d8de"></div><div style="position:absolute;left:18px;top:42px;width:8px;height:12px;background:#6b7fa0"></div><div style="position:absolute;left:32px;top:41px;width:8px;height:13px;background:#23395e"></div><div style="position:absolute;left:44px;top:42px;width:4px;height:12px;background:#c4c8cf"></div></div></div>
<div style="position:absolute;left:1293px;top:489px;width:54px;height:54px;border-radius:3px;overflow:hidden;background:#c4bdb7"><div style="position:absolute;left:0;top:0;width:54px;height:54px;filter:blur(0.6px)"><div style="position:absolute;left:0px;top:0px;width:54px;height:54px;background:linear-gradient(180deg,#cfcac6 0%,#bdb6b0 45%,#c7c1bb 70%,#9d958f 100%)"></div><div style="position:absolute;left:38px;top:0px;width:16px;height:54px;background:linear-gradient(90deg,#b9b3ae,#8f8986)"></div><div style="position:absolute;left:46px;top:5px;width:3px;height:40px;background:#403d3c;transform:rotate(8deg)"></div><div style="position:absolute;left:0px;top:24px;width:48px;height:3px;background:rgba(255,255,255,.7)"></div><div style="position:absolute;left:0px;top:29px;width:30px;height:2px;background:rgba(255,255,255,.55)"></div><div style="position:absolute;left:10px;top:10px;width:18px;height:9px;background:#a89a90;border-radius:2px"></div><div style="position:absolute;left:4px;top:38px;width:30px;height:6px;background:#a49c96;transform:rotate(-12deg)"></div></div></div>
<div style="position:absolute;left:1293px;top:567.5px;width:54px;height:54px;border-radius:3px;overflow:hidden;background:#5a534e"><div style="position:absolute;left:0;top:0;width:54px;height:54px;filter:blur(0.6px)"><div style="position:absolute;left:0px;top:0px;width:54px;height:12px;background:linear-gradient(180deg,#6d6560,#4d4743)"></div><div style="position:absolute;left:0px;top:12px;width:54px;height:10px;background:#8f8880"></div><div style="position:absolute;left:0px;top:22px;width:54px;height:32px;background:linear-gradient(180deg,#5e5650,#3a332e)"></div><div style="position:absolute;left:4px;top:20px;width:14px;height:30px;background:#c8aa82;border-radius:6px 6px 0 0"></div><div style="position:absolute;left:6px;top:14px;width:9px;height:9px;background:#caa57a;border-radius:50%"></div><div style="position:absolute;left:18px;top:18px;width:10px;height:30px;background:#6f5446;border-radius:5px 5px 0 0"></div><div style="position:absolute;left:34px;top:18px;width:16px;height:30px;background:#8a5540;border-radius:6px 6px 0 0"></div><div style="position:absolute;left:37px;top:12px;width:10px;height:10px;background:#2a1c18;border-radius:50%"></div><div style="position:absolute;left:10px;top:40px;width:34px;height:8px;background:#b59a74"></div><div style="position:absolute;left:40px;top:4px;width:12px;height:14px;background:#9a948c"></div></div></div>
<div style="position:absolute;left:1293px;top:642px;width:54px;height:54px;border-radius:3px;overflow:hidden;background:#f1efec"><div style="position:absolute;left:0;top:0;width:54px;height:54px;filter:blur(0.6px)"><div style="position:absolute;left:0px;top:0px;width:54px;height:54px;background:#f1efec"></div><div style="position:absolute;left:0px;top:0px;width:24px;height:14px;background:linear-gradient(180deg,#e8d28a,#c9a24a)"></div><div style="position:absolute;left:8px;top:2px;width:14px;height:3px;background:#3a3028"></div><div style="position:absolute;left:30px;top:4px;width:20px;height:18px;background:#ef9b82;border-radius:40% 40% 10% 10%"></div><div style="position:absolute;left:0px;top:8px;width:12px;height:46px;background:linear-gradient(180deg,#a8cff0,#3a8fd8)"></div><div style="position:absolute;left:0px;top:38px;width:14px;height:16px;background:#2f86d8"></div><div style="position:absolute;left:12px;top:30px;width:14px;height:10px;background:#f2b23a;border-radius:50%"></div><div style="position:absolute;left:30px;top:30px;width:18px;height:10px;background:#d9533a"></div><div style="position:absolute;left:0px;top:23px;width:54px;height:8px;background:linear-gradient(90deg,#b09a7a,#8f7a60)"></div><div style="position:absolute;left:2px;top:25px;width:50px;height:4px;background:#f4ede0"></div></div></div>
<div style="position:absolute;left:1293px;top:720px;width:54px;height:54px;border-radius:3px;overflow:hidden;background:#555"><div style="position:absolute;left:0;top:0;width:54px;height:54px;filter:blur(0.6px)"><div style="position:absolute;left:0px;top:0px;width:54px;height:10px;background:linear-gradient(90deg,#6b6e60,#a6c28e 60%,#7fa46a)"></div><div style="position:absolute;left:8px;top:8px;width:40px;height:6px;background:#f2f2f2;border-top:2px solid #333"></div><div style="position:absolute;left:0px;top:14px;width:54px;height:8px;background:#d8dad6"></div><div style="position:absolute;left:0px;top:22px;width:54px;height:5px;background:#3e4a42"></div><div style="position:absolute;left:0px;top:27px;width:54px;height:9px;background:#e55b3e"></div><div style="position:absolute;left:0px;top:28px;width:54px;height:7px;background:repeating-linear-gradient(90deg,#e55b3e 0 3px,#f7c6b6 3px 4px)"></div><div style="position:absolute;left:0px;top:36px;width:54px;height:6px;background:#8c8886"></div><div style="position:absolute;left:0px;top:42px;width:54px;height:12px;background:linear-gradient(180deg,#4a4240,#2e2826)"></div></div></div>
<svg style="left:1293px;top:801px;" width="14" height="11.5" viewBox="0 0 14 11.5"><g fill="#2c3e50"><rect x="0" y="0" width="2.4" height="2.2"/><rect x="0" y="4.6" width="2.4" height="2.2"/><rect x="0" y="9.2" width="2.4" height="2.2"/><rect x="4" y="0.3" width="10" height="1.7"/><rect x="4" y="4.9" width="10" height="1.7"/><rect x="4" y="9.5" width="10" height="1.7"/></g></svg>
<div style="position:absolute;left:1292px;top:880px;width:320px;height:40px;border-radius:4px 4px 0 0;background:linear-gradient(90deg,#2f9a3e,#237a32 75%,#1d6b2c)"></div>
<svg style="left:1312px;top:893.5px;" width="14" height="12" viewBox="0 0 512 448"><path fill="#cfe6d1" d="M256 0C115 0 0 93 0 208c0 50 22 95 58 131-13 51-55 96-55 97-3 3-3 7-2 10 2 4 5 6 9 6 67 0 118-32 143-52 33 12 69 19 103 19 141 0 256-93 256-208S397 0 256 0z"/></svg>
<svg style="left:1585px;top:896.5px;" width="10" height="6" viewBox="0 0 10 6"><path d="M1 5L5 1.3L9 5" fill="none" stroke="#e6f2e7" stroke-width="1.8"/></svg>
<div class="t" style="left:83px;top:9.77px;font-size:12.5px;line-height:12.5px;color:#e6e8eb;font-weight:400;transform:scaleX(0.8761);transform-origin:left;">Français</div>
<div class="t" style="left:219px;top:9.77px;font-size:12.5px;line-height:12.5px;color:#e6e8eb;font-weight:400;transform:scaleX(0.9280);transform-origin:left;">Prévisualiser l&#x27;entreprise</div>
<div class="t" style="left:1504px;top:9.60px;font-size:12px;line-height:12px;color:#e9f3ea;font-weight:400;transform:scaleX(0.9417);transform-origin:left;">Salutation, <b>Amine Ben...</b></div>
<div class="t" style="left:477px;top:49.28px;font-size:14.5px;line-height:14.5px;color:#6c737a;font-weight:400;transform:scaleX(0.9203);transform-origin:left;">Rechercher une entreprise</div>
<div class="t" style="left:1235px;top:47.20px;font-size:16px;line-height:16px;color:#2c3e50;font-weight:400;transform:scaleX(0.7828);transform-origin:left;">Assistance live chat</div>
<div class="t" style="left:68px;top:99.88px;font-size:14.5px;line-height:14.5px;color:#f2f7f2;font-weight:700;transform:scaleX(0.9187);transform-origin:left;">Salama Assurance</div>
<div class="t" style="left:68px;top:119.78px;font-size:12.5px;line-height:12.5px;color:#15361f;font-weight:700;transform:scaleX(0.9394);transform-origin:left;">Retourner à l&#x27;entreprise</div>
<div class="t" style="left:44px;top:164.25px;font-size:13px;line-height:13px;color:#f2f7f2;font-weight:400;transform:scaleX(0.9544);transform-origin:left;">Tableau de bord</div>
<div class="t" style="left:20px;top:200.95px;font-size:13px;line-height:13px;color:#ffffff;font-weight:700;transform:scaleX(0.8649);transform-origin:left;">Accueil</div>
<div class="t" style="left:20px;top:236.45px;font-size:13px;line-height:13px;color:#e8f3e9;font-weight:400;transform:scaleX(1.0251);transform-origin:left;">Historique</div>
<div class="t" style="left:44px;top:273.45px;font-size:13px;line-height:13px;color:#f2f7f2;font-weight:400;transform:scaleX(0.9613);transform-origin:left;">Mon réseau</div>
<div class="t" style="left:44px;top:312.45px;font-size:13px;line-height:13px;color:#f2f7f2;font-weight:400;transform:scaleX(0.9779);transform-origin:left;">Mes favoris</div>
<div class="t" style="left:44px;top:351.45px;font-size:13px;line-height:13px;color:#f2f7f2;font-weight:400;">Mes alertes</div>
<div class="t" style="left:44px;top:390.45px;font-size:13px;line-height:13px;color:#f2f7f2;font-weight:400;">Mes listes</div>
<div class="t" style="left:44px;top:429.45px;font-size:13px;line-height:13px;color:#f2f7f2;font-weight:400;">Mes transactions</div>
<div class="t" style="left:44px;top:468.45px;font-size:13px;line-height:13px;color:#f2f7f2;font-weight:400;transform:scaleX(0.9458);transform-origin:left;">Feedback</div>
<div class="t" style="left:44px;top:507.45px;font-size:13px;line-height:13px;color:#f2f7f2;font-weight:400;transform:scaleX(0.9668);transform-origin:left;">Rapports</div>
<div class="t" style="left:44px;top:546.45px;font-size:13px;line-height:13px;color:#f2f7f2;font-weight:400;transform:scaleX(0.9644);transform-origin:left;">Mon compte</div>
<div class="t" style="left:44px;top:585.45px;font-size:13px;line-height:13px;color:#f2f7f2;font-weight:400;transform:scaleX(0.9523);transform-origin:left;">Paramètres</div>
<div class="t" style="left:44px;top:624.95px;font-size:13px;line-height:13px;color:#f2f7f2;font-weight:400;transform:scaleX(0.9604);transform-origin:left;">Aide</div>
<div class="t" style="left:20px;top:675.30px;font-size:10px;line-height:10px;color:#8fcf97;font-weight:400;transform:scaleX(0.9745);transform-origin:left;">LIENS UTILES</div>
<div class="t" style="left:20px;top:706.33px;font-size:15.5px;line-height:15.5px;color:#ffffff;font-weight:700;transform:scaleX(0.7588);transform-origin:left;">Marketplace</div>
<div class="t" style="left:20px;top:725.23px;font-size:11.5px;line-height:11.5px;color:#8fcf97;font-weight:400;transform:scaleX(0.9602);transform-origin:left;">Trouver des offres</div>
<div class="t" style="left:20px;top:750.43px;font-size:15.5px;line-height:15.5px;color:#ffffff;font-weight:700;transform:scaleX(0.7380);transform-origin:left;">Fil d&#x27;actualités</div>
<div class="t" style="left:20px;top:769.23px;font-size:11.5px;line-height:11.5px;color:#8fcf97;font-weight:400;">Vivez l&#x27;info en temps réel</div>
<div class="t" style="left:30px;top:860.38px;font-size:12.5px;line-height:12.5px;color:#bfe0c3;font-weight:400;transform:scaleX(1.0172);transform-origin:left;">Besoin d&#x27;aide ? Il vous suffit</div>
<div class="t" style="left:30px;top:874.38px;font-size:12.5px;line-height:12.5px;color:#bfe0c3;font-weight:400;transform:scaleX(1.0163);transform-origin:left;">d&#x27;envoyer un e-mail.</div>
<div class="t" style="left:30px;top:889.58px;font-size:12.5px;line-height:12.5px;color:#0f2a18;font-weight:400;transform:scaleX(1.0532);transform-origin:left;">support@algerieoffice.net</div>
<div class="t" style="left:280px;top:95.15px;font-size:13px;line-height:13px;color:#777d83;font-weight:400;transform:scaleX(0.9589);transform-origin:left;">Vous êtes ici</div>
<div class="t" style="left:363px;top:95.15px;font-size:13px;line-height:13px;color:#777d83;font-weight:400;">›</div>
<div class="t" style="left:398px;top:95.15px;font-size:13px;line-height:13px;color:#2c3e50;font-weight:400;transform:scaleX(0.9544);transform-origin:left;">Tableau de bord</div>
<div class="t" style="left:500px;top:95.15px;font-size:13px;line-height:13px;color:#777d83;font-weight:400;">›</div>
<div class="t" style="left:514.5px;top:95.15px;font-size:13px;line-height:13px;color:#2c3e50;font-weight:400;transform:scaleX(0.9780);transform-origin:left;">Accueil</div>
<div class="t" style="left:1273px;top:91.28px;font-size:18.5px;line-height:18.5px;color:#2c4a6a;font-weight:400;transform:scaleX(0.9184);transform-origin:left;">Panneau d&#x27;informations</div>
<div class="t" style="left:281px;top:144.80px;font-size:30px;line-height:30px;color:#1d3e5e;font-weight:400;transform:scaleX(0.8412);transform-origin:left;">Tableau de bord</div>
<div class="t" style="left:281px;top:182.68px;font-size:14.5px;line-height:14.5px;color:#333a40;font-weight:400;transform:scaleX(0.9787);transform-origin:left;">Bienvenue dans le tableau de bord de votre compte.</div>
<div class="t" style="left:300px;top:249.60px;font-size:16px;line-height:16px;color:#2c3e50;font-weight:400;transform:scaleX(0.8156);transform-origin:left;">Votre réseau</div>
<div class="t" style="left:300px;top:267.83px;font-size:11.5px;line-height:11.5px;color:#4a4f55;font-weight:400;transform:scaleX(1.0139);transform-origin:left;">Aujourd&#x27;hui, 12 juin 2021</div>
<div class="t" style="left:355px;top:350.85px;font-size:47px;line-height:47px;color:#1e56a0;font-weight:400;transform:scaleX(0.7360);transform-origin:left;">0%</div>
<div class="t" style="left:346.5px;top:401.35px;font-size:13px;line-height:13px;color:#2c3e50;font-weight:400;transform:scaleX(1.0190);transform-origin:left;">Entreprises</div>
<div class="t" style="left:515px;top:337.60px;font-size:34px;line-height:34px;color:#17365d;font-weight:400;transform:scaleX(0.7927);transform-origin:left;">0</div>
<div class="t" style="left:515px;top:373.43px;font-size:11.5px;line-height:11.5px;color:#4a4f55;font-weight:400;transform:scaleX(0.9636);transform-origin:left;">Entreprises suivies</div>
<div class="t" style="left:515px;top:406.40px;font-size:34px;line-height:34px;color:#17365d;font-weight:400;transform:scaleX(0.7927);transform-origin:left;">0</div>
<div class="t" style="left:515px;top:441.93px;font-size:11.5px;line-height:11.5px;color:#4a4f55;font-weight:400;transform:scaleX(0.9638);transform-origin:left;">Membres suivis</div>
<div class="t" style="left:490px;top:483.35px;font-size:13px;line-height:13px;color:#464c52;font-weight:400;transform:scaleX(1.0123);transform-origin:left;"><b>Amine</b>, suivez les entreprises et/ou</div>
<div class="t" style="left:490px;top:502.05px;font-size:13px;line-height:13px;color:#464c52;font-weight:400;transform:scaleX(1.0243);transform-origin:left;">membres sur AlgérieOffice pour</div>
<div class="t" style="left:490px;top:521.25px;font-size:13px;line-height:13px;color:#464c52;font-weight:400;transform:scaleX(0.9874);transform-origin:left;">développer votre réseau.</div>
<div class="t" style="left:316px;top:568.83px;font-size:15.5px;line-height:15.5px;color:#2c3e50;font-weight:400;transform:scaleX(0.8189);transform-origin:left;">Gérer mon réseau</div>
<div class="t" style="left:776.5px;top:249.60px;font-size:16px;line-height:16px;color:#2c3e50;font-weight:400;transform:scaleX(0.8305);transform-origin:left;">Vos favoris</div>
<div class="t" style="left:776.5px;top:268.03px;font-size:11.5px;line-height:11.5px;color:#4a4f55;font-weight:400;transform:scaleX(0.9440);transform-origin:left;">Résumé de vos données préférées.</div>
<div class="t" style="right:678px;top:313.95px;font-size:13px;line-height:13px;color:#2c3e50;font-weight:400;transform:scaleX(1.0066);transform-origin:right;">Produits &amp; services</div>
<div class="t" style="right:678px;top:329.50px;font-size:18px;line-height:18px;color:#1e3a5f;font-weight:400;transform:scaleX(0.8986);transform-origin:right;">0</div>
<div class="t" style="left:776px;top:366.88px;font-size:12.5px;line-height:12.5px;color:#4a4f55;font-weight:400;transform:scaleX(1.0054);transform-origin:left;">tendances</div>
<div class="t" style="right:678px;top:367.30px;font-size:12px;line-height:12px;color:#4a4f55;font-weight:400;transform:scaleX(1.0378);transform-origin:right;">0%</div>
<div class="t" style="right:450px;top:313.95px;font-size:13px;line-height:13px;color:#2c3e50;font-weight:400;transform:scaleX(1.0376);transform-origin:right;">Annonces</div>
<div class="t" style="right:450px;top:329.50px;font-size:18px;line-height:18px;color:#1e3a5f;font-weight:400;transform:scaleX(0.8986);transform-origin:right;">0</div>
<div class="t" style="left:1004px;top:366.88px;font-size:12.5px;line-height:12.5px;color:#4a4f55;font-weight:400;transform:scaleX(1.0054);transform-origin:left;">tendances</div>
<div class="t" style="right:450px;top:367.30px;font-size:12px;line-height:12px;color:#4a4f55;font-weight:400;transform:scaleX(1.0378);transform-origin:right;">0%</div>
<div class="t" style="right:678px;top:401.55px;font-size:13px;line-height:13px;color:#2c3e50;font-weight:400;transform:scaleX(1.0102);transform-origin:right;">Événements</div>
<div class="t" style="right:678px;top:417.10px;font-size:18px;line-height:18px;color:#1e3a5f;font-weight:400;transform:scaleX(0.8986);transform-origin:right;">0</div>
<div class="t" style="left:776px;top:454.48px;font-size:12.5px;line-height:12.5px;color:#4a4f55;font-weight:400;transform:scaleX(1.0054);transform-origin:left;">tendances</div>
<div class="t" style="right:678px;top:454.90px;font-size:12px;line-height:12px;color:#4a4f55;font-weight:400;transform:scaleX(1.0378);transform-origin:right;">0%</div>
<div class="t" style="right:450px;top:401.55px;font-size:13px;line-height:13px;color:#2c3e50;font-weight:400;transform:scaleX(1.0256);transform-origin:right;">Offres d&#x27;emploi</div>
<div class="t" style="right:450px;top:417.10px;font-size:18px;line-height:18px;color:#1e3a5f;font-weight:400;transform:scaleX(0.8986);transform-origin:right;">0</div>
<div class="t" style="left:1004px;top:454.48px;font-size:12.5px;line-height:12.5px;color:#4a4f55;font-weight:400;transform:scaleX(1.0054);transform-origin:left;">tendances</div>
<div class="t" style="right:450px;top:454.90px;font-size:12px;line-height:12px;color:#4a4f55;font-weight:400;transform:scaleX(1.0378);transform-origin:right;">0%</div>
<div class="t" style="left:791px;top:568.83px;font-size:15.5px;line-height:15.5px;color:#2c3e50;font-weight:400;transform:scaleX(0.8443);transform-origin:left;">Gérer mes favoris</div>
<div class="t" style="left:300px;top:635.75px;font-size:13px;line-height:13px;color:#2c3e50;font-weight:400;transform:scaleX(1.0255);transform-origin:left;">Offres commerciales</div>
<div class="t" style="left:300px;top:652.15px;font-size:19px;line-height:19px;color:#1e3a5f;font-weight:400;transform:scaleX(0.8508);transform-origin:left;">0</div>
<div class="t" style="left:300px;top:686.77px;font-size:12.5px;line-height:12.5px;color:#4a4f55;font-weight:400;transform:scaleX(1.0754);transform-origin:left;">parution d&#x27;alerte</div>
<div class="t" style="right:1164px;top:687.20px;font-size:12px;line-height:12px;color:#4a4f55;font-weight:400;">0</div>
<div class="t" style="left:538px;top:635.75px;font-size:13px;line-height:13px;color:#2c3e50;font-weight:400;transform:scaleX(0.9910);transform-origin:left;">Avis de marchés</div>
<div class="t" style="left:538px;top:652.15px;font-size:19px;line-height:19px;color:#1e3a5f;font-weight:400;transform:scaleX(0.8508);transform-origin:left;">0</div>
<div class="t" style="left:538px;top:686.77px;font-size:12.5px;line-height:12.5px;color:#4a4f55;font-weight:400;transform:scaleX(1.0754);transform-origin:left;">parution d&#x27;alerte</div>
<div class="t" style="right:926px;top:687.20px;font-size:12px;line-height:12px;color:#4a4f55;font-weight:400;">0</div>
<div class="t" style="left:776px;top:635.75px;font-size:13px;line-height:13px;color:#2c3e50;font-weight:400;">Événements</div>
<div class="t" style="left:776px;top:652.15px;font-size:19px;line-height:19px;color:#1e3a5f;font-weight:400;transform:scaleX(0.8508);transform-origin:left;">0</div>
<div class="t" style="left:776px;top:686.77px;font-size:12.5px;line-height:12.5px;color:#4a4f55;font-weight:400;transform:scaleX(1.0754);transform-origin:left;">parution d&#x27;alerte</div>
<div class="t" style="right:688px;top:687.20px;font-size:12px;line-height:12px;color:#4a4f55;font-weight:400;">0</div>
<div class="t" style="left:1014px;top:635.75px;font-size:13px;line-height:13px;color:#2c3e50;font-weight:400;transform:scaleX(1.0077);transform-origin:left;">Offres d&#x27;emplois</div>
<div class="t" style="left:1014px;top:652.15px;font-size:19px;line-height:19px;color:#1e3a5f;font-weight:400;transform:scaleX(0.8508);transform-origin:left;">0</div>
<div class="t" style="left:1014px;top:686.77px;font-size:12.5px;line-height:12.5px;color:#4a4f55;font-weight:400;transform:scaleX(1.0754);transform-origin:left;">parution d&#x27;alerte</div>
<div class="t" style="right:450px;top:687.20px;font-size:12px;line-height:12px;color:#4a4f55;font-weight:400;">0</div>
<div class="t" style="left:300px;top:746.60px;font-size:16px;line-height:16px;color:#2c3e50;font-weight:400;transform:scaleX(0.8272);transform-origin:left;">Historique personnel - dernières tâches</div>
<div class="t" style="left:340.6px;top:793.95px;font-size:13px;line-height:13px;color:#2c3e50;font-weight:400;transform:scaleX(0.9756);transform-origin:left;">Réglages généraux</div>
<div class="t" style="left:616px;top:793.95px;font-size:13px;line-height:13px;color:#2c3e50;font-weight:400;transform:scaleX(1.0800);transform-origin:left;">06 juin - 12:21</div>
<div class="t" style="left:340.6px;top:840.95px;font-size:13px;line-height:13px;color:#2c3e50;font-weight:400;transform:scaleX(0.9756);transform-origin:left;">Réglages généraux</div>
<div class="t" style="left:616px;top:840.95px;font-size:13px;line-height:13px;color:#2c3e50;font-weight:400;transform:scaleX(1.0800);transform-origin:left;">04 juin - 13:49</div>
<div class="t" style="left:340.6px;top:887.95px;font-size:13px;line-height:13px;color:#2c3e50;font-weight:400;transform:scaleX(0.9756);transform-origin:left;">Réglages généraux</div>
<div class="t" style="left:616px;top:887.95px;font-size:13px;line-height:13px;color:#2c3e50;font-weight:400;transform:scaleX(1.0800);transform-origin:left;">03 juin - 20:32</div>
<div class="t" style="left:776px;top:746.60px;font-size:16px;line-height:16px;color:#2c3e50;font-weight:400;transform:scaleX(0.8357);transform-origin:left;">Tendances de votre activité cette semaine</div>
<div class="t" style="left:776px;top:783.85px;font-size:21px;line-height:21px;color:#1d3b5c;font-weight:400;transform:scaleX(0.8556);transform-origin:left;">0</div>
<div class="t" style="left:791.5px;top:809.02px;font-size:11.5px;line-height:11.5px;color:#4a4f55;font-weight:400;transform:scaleX(0.9722);transform-origin:left;">Accès aux entreprises</div>
<div class="t" style="left:935px;top:783.85px;font-size:21px;line-height:21px;color:#1d3b5c;font-weight:400;transform:scaleX(0.8556);transform-origin:left;">0</div>
<div class="t" style="left:950.5px;top:809.02px;font-size:11.5px;line-height:11.5px;color:#4a4f55;font-weight:400;">Ajout aux favoris</div>
<div class="t" style="left:1068px;top:783.85px;font-size:21px;line-height:21px;color:#1d3b5c;font-weight:400;transform:scaleX(0.8556);transform-origin:left;">1</div>
<div class="t" style="left:1083.5px;top:809.02px;font-size:11.5px;line-height:11.5px;color:#4a4f55;font-weight:400;transform:scaleX(1.0091);transform-origin:left;">D&#x27;autres activités</div>
<div class="t" style="right:855px;top:853.88px;font-size:10.5px;line-height:10.5px;color:#555;font-weight:400;transform:scaleX(1.0267);transform-origin:right;">1.0</div>
<div class="t" style="right:855px;top:872.52px;font-size:10.5px;line-height:10.5px;color:#555;font-weight:400;transform:scaleX(1.0267);transform-origin:right;">0.9</div>
<div class="t" style="right:855px;top:891.17px;font-size:10.5px;line-height:10.5px;color:#555;font-weight:400;transform:scaleX(1.0267);transform-origin:right;">0.8</div>
<div class="t" style="right:855px;top:909.83px;font-size:10.5px;line-height:10.5px;color:#555;font-weight:400;transform:scaleX(1.0267);transform-origin:right;">0.7</div>
<div class="t" style="left:1425px;top:118.75px;font-size:35px;line-height:35px;color:#1a2a3c;font-weight:700;transform:scaleX(0.7993);transform-origin:left;">17%</div>
<div class="t" style="left:1452.5px;top:231.53px;font-size:11.5px;line-height:11.5px;color:#4a4f55;font-weight:400;transform:translateX(-50%) scaleX(0.9746);transform-origin:center;">Franchissez les paliers d&#x27;expérience et devenez ambassadeurs,</div>
<div class="t" style="left:1452.5px;top:245.22px;font-size:11.5px;line-height:11.5px;color:#4a4f55;font-weight:400;transform:translateX(-50%) scaleX(0.9789);transform-origin:center;">obtenant ainsi le badge Super User.</div>
<div class="t" style="left:1293px;top:283.02px;font-size:13.5px;line-height:13.5px;color:#2c3436;font-weight:400;transform:scaleX(0.9631);transform-origin:left;"><b>Expérience</b> : Débutant</div>
<div class="t" style="left:1293.4px;top:367.80px;font-size:16px;line-height:16px;color:#2c3e50;font-weight:400;transform:scaleX(0.8108);transform-origin:left;">Le Blog</div>
<div class="t" style="left:1365px;top:412.22px;font-size:15.5px;line-height:15.5px;color:#2c4a6a;font-weight:400;transform:scaleX(0.8508);transform-origin:left;">6 conseils pour bien préparer vos</div>
<div class="t" style="left:1365px;top:430.82px;font-size:15.5px;line-height:15.5px;color:#2c4a6a;font-weight:400;transform:scaleX(0.9080);transform-origin:left;">réunions</div>
<div class="t" style="left:1365px;top:454.23px;font-size:11.5px;line-height:11.5px;color:#4a4f55;font-weight:400;transform:scaleX(0.9709);transform-origin:left;">Par <u>Hadjer Rahou</u>, Le 08/06/2021</div>
<div class="t" style="left:1365px;top:489.82px;font-size:15.5px;line-height:15.5px;color:#2c4a6a;font-weight:400;transform:scaleX(0.8565);transform-origin:left;">6 astuces pour promouvoir votre nouveau</div>
<div class="t" style="left:1365px;top:508.43px;font-size:15.5px;line-height:15.5px;color:#2c4a6a;font-weight:400;transform:scaleX(0.9495);transform-origin:left;">site web</div>
<div class="t" style="left:1365px;top:531.83px;font-size:11.5px;line-height:11.5px;color:#4a4f55;font-weight:400;transform:scaleX(0.9709);transform-origin:left;">Par <u>Hadjer Rahou</u>, Le 08/06/2021</div>
<div class="t" style="left:1365px;top:568.12px;font-size:15.5px;line-height:15.5px;color:#2c4a6a;font-weight:400;transform:scaleX(0.8520);transform-origin:left;">5 manières de motiver votre équipe</div>
<div class="t" style="left:1365px;top:591.52px;font-size:11.5px;line-height:11.5px;color:#4a4f55;font-weight:400;transform:scaleX(0.9709);transform-origin:left;">Par <u>Hadjer Rahou</u>, Le 03/06/2021</div>
<div class="t" style="left:1365px;top:684.52px;font-size:11.5px;line-height:11.5px;color:#4a4f55;font-weight:400;transform:scaleX(0.9709);transform-origin:left;">Par <u>Hadjer Rahou</u>, Le 03/06/2021</div>
<div class="t" style="left:1365px;top:720.93px;font-size:15.5px;line-height:15.5px;color:#2c4a6a;font-weight:400;transform:scaleX(0.8444);transform-origin:left;">4 étapes pour créer une marque</div>
<div class="t" style="left:1365px;top:739.53px;font-size:15.5px;line-height:15.5px;color:#2c4a6a;font-weight:400;transform:scaleX(0.8513);transform-origin:left;">mémorable</div>
<div class="t" style="left:1365px;top:762.93px;font-size:11.5px;line-height:11.5px;color:#4a4f55;font-weight:400;transform:scaleX(0.9709);transform-origin:left;">Par <u>Hadjer Rahou</u>, Le 20/05/2021</div>
<div class="t" style="left:1365px;top:643.25px;font-size:15px;line-height:15px;color:#2c4a6a;font-weight:400;transform:scaleX(0.7724);transform-origin:left;">أربع طرق للرد على العميل الذي يعتقد أن عرضك</div>
<div class="t" style="left:1365px;top:661.25px;font-size:15px;line-height:15px;color:#2c4a6a;font-weight:400;transform:scaleX(0.7573);transform-origin:left;">مكلف للغاية&quot;&quot;</div>
<div class="t" style="left:1321px;top:798.80px;font-size:16px;line-height:16px;color:#2c3e50;font-weight:400;transform:scaleX(0.8346);transform-origin:left;">Tous les articles</div>
<div class="t" style="left:1335.4px;top:892.70px;font-size:14px;line-height:14px;color:#d8ecd9;font-weight:400;transform:scaleX(0.8176);transform-origin:left;">Chat publique (pro uniquement)</div>
<div class="t" style="left:50.5px;top:43.50px;font-size:20px;line-height:20px;color:#1e3347;font-weight:700;transform:scaleX(0.8153);transform-origin:left;">Alg<span style="position:relative">ē</span>rie<span style="color:#3aa64a">Office</span></div>
<div class="t" style="left:77px;top:61.05px;font-size:7px;line-height:7px;color:#1e3347;font-weight:700;transform:scaleX(0.9138);transform-origin:left;">Informations entreprises</div>
</body></html>
